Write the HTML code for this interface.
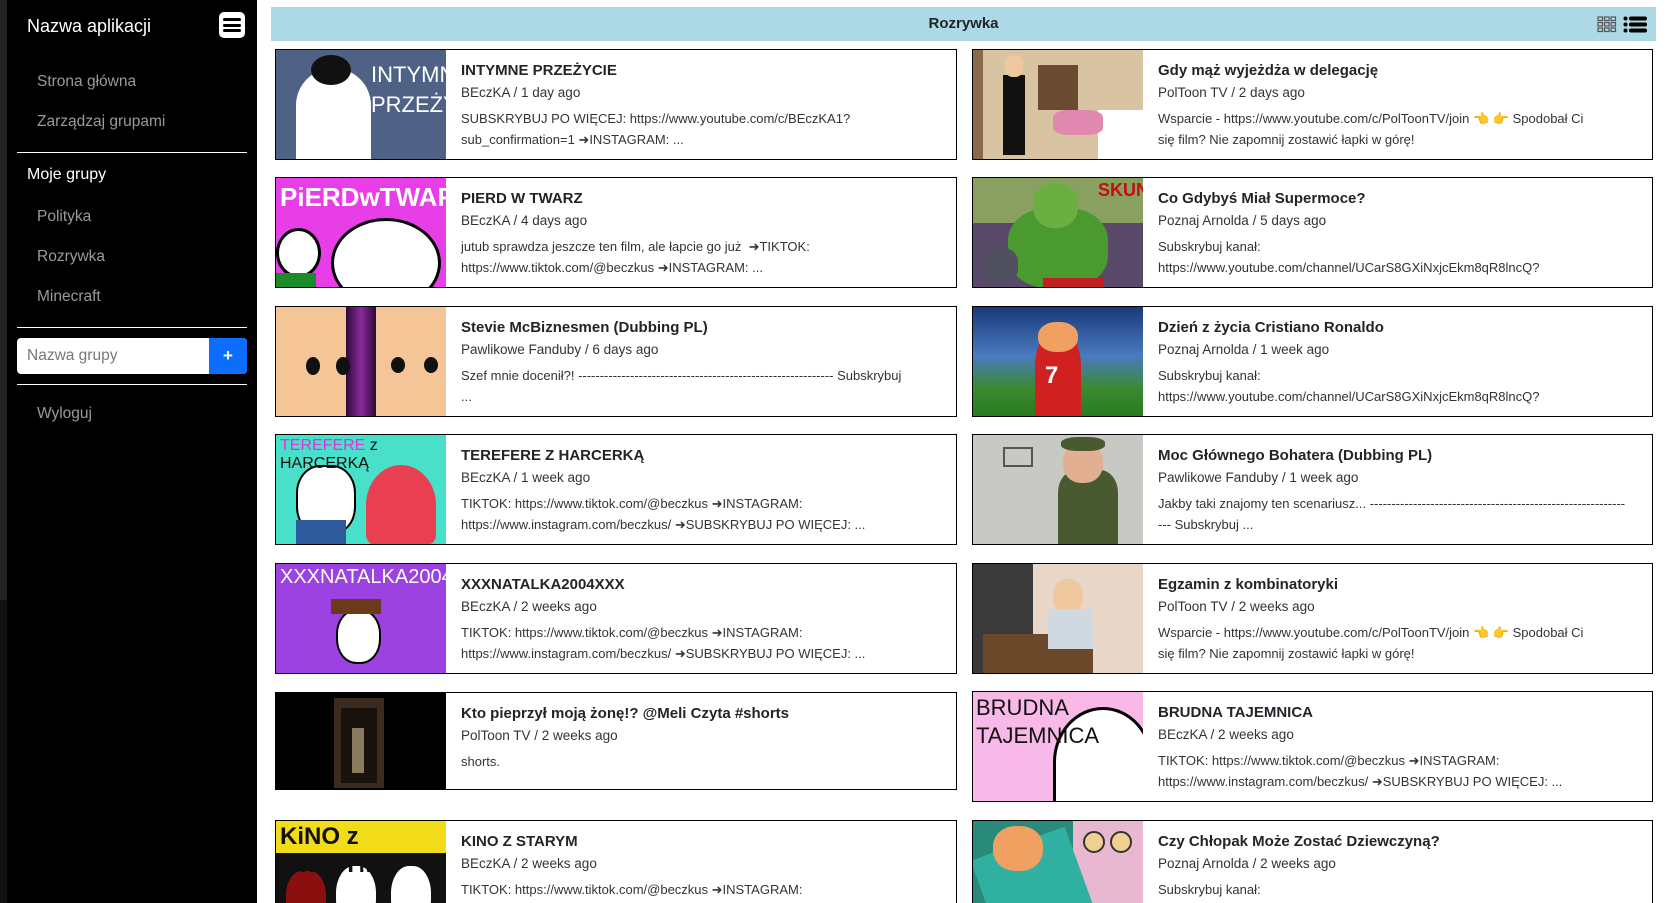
<!DOCTYPE html>
<html><head><meta charset="utf-8">
<style>
*{box-sizing:border-box;margin:0;padding:0}
html,body{width:1666px;height:903px;overflow:hidden}
body{background:#fff;font-family:"Liberation Sans",sans-serif;color:#212529;position:relative}
#wrap{position:absolute;left:0;top:0;width:1666px;height:903px;overflow:hidden}
.strip{position:absolute;left:0;top:0;width:7px;height:600px;background:#222}
.strip2{position:absolute;left:0;top:600px;width:7px;height:303px;background:#111}
.side{position:absolute;left:7px;top:0;width:250px;height:903px;background:#000;color:#fff}
.side .t{position:absolute;left:20px;top:16px;font-size:18px}
.side a{position:absolute;left:30px;font-size:15.5px;color:#9a9a9a;text-decoration:none}
.side .h{position:absolute;left:20px;font-size:16px;color:#fff}
.side hr{position:absolute;left:10px;width:230px;border:0;border-top:1px solid #fff}
.inp{position:absolute;left:10px;top:338px;width:230px;height:36px;background:#fff;border-radius:4px;overflow:hidden}
.inp span{position:absolute;left:10px;top:9px;color:#777;font-size:15.5px}
.inp b{position:absolute;right:0;top:0;width:38px;height:36px;background:#0d6efd;color:#fff;text-align:center;line-height:36px;font-size:17px}
.burger{position:absolute;left:212px;top:12px;width:26px;height:26px;background:#fff;border-radius:5px}
.burger i{position:absolute;left:4px;width:18px;height:3px;background:#000;border-radius:2px}
.hdr{position:absolute;left:271px;top:7px;width:1385px;height:34px;background:#add8e6;text-align:center;font-weight:bold;font-size:15px;line-height:34px}
.card{position:absolute;border:1px solid #000;height:111px;width:682px;background:#fff}
.th{position:absolute;left:0;top:0;width:170px;height:109px;overflow:hidden}
.tx{position:absolute;left:185px;top:10px;white-space:nowrap}
.tx .ti{font-weight:bold;font-size:15px;height:22px;line-height:22px}
.tx .me{font-size:13.5px;line-height:22px;height:22px;color:#333}
.tx .de{font-size:13px;line-height:20.5px;margin-top:5px;color:#333}
</style></head><body><div id="wrap">
<div class="strip"></div><div class="strip2"></div>
<div class="side">
<div class="t">Nazwa aplikacji</div>
<div class="burger"><i style="top:6px"></i><i style="top:11.5px"></i><i style="top:17px"></i></div>
<a style="top:73px">Strona główna</a>
<a style="top:113px">Zarządzaj grupami</a>
<hr style="top:152px">
<div class="h" style="top:166px">Moje grupy</div>
<a style="top:208px">Polityka</a>
<a style="top:248px">Rozrywka</a>
<a style="top:288px">Minecraft</a>
<hr style="top:327px">
<div class="inp"><span>Nazwa grupy</span><b>+</b></div>
<hr style="top:384px">
<a style="top:405px">Wyloguj</a>
</div>
<div class="hdr">Rozrywka
<svg style="position:absolute;left:1326px;top:9px" width="20" height="17" viewBox="0 0 20 17" fill="none" stroke="#555" stroke-width="1.2"><rect x="1" y="1" width="4.5" height="3.5"/><rect x="7.5" y="1" width="4.5" height="3.5"/><rect x="14" y="1" width="4.5" height="3.5"/><rect x="1" y="6.5" width="4.5" height="3.5"/><rect x="7.5" y="6.5" width="4.5" height="3.5"/><rect x="14" y="6.5" width="4.5" height="3.5"/><rect x="1" y="12" width="4.5" height="3.5"/><rect x="7.5" y="12" width="4.5" height="3.5"/><rect x="14" y="12" width="4.5" height="3.5"/></svg>
<svg style="position:absolute;left:1352px;top:9px" width="24" height="17" viewBox="0 0 24 17" fill="#000"><circle cx="2.5" cy="2.5" r="2"/><circle cx="2.5" cy="8.5" r="2"/><circle cx="2.5" cy="14.5" r="2"/><rect x="6" y="0.5" width="18" height="4" rx="2"/><rect x="6" y="6.5" width="18" height="4" rx="2"/><rect x="6" y="12.5" width="18" height="4" rx="2"/></svg>
</div>

<div class="card" style="left:275px;top:49px"><div class="th" style="background:#4f6185"><div style="position:absolute;left:20px;top:18px;width:75px;height:100px;background:#fff;border-radius:40px 40px 0 0"></div><div style="position:absolute;left:35px;top:5px;width:40px;height:30px;background:#111;border-radius:50%"></div><div style="position:absolute;left:95px;top:10px;color:#fff;font-size:22px;line-height:30px">INTYMNE<br>PRZEŻYCIE</div></div>
<div class="tx"><div class="ti">INTYMNE PRZEŻYCIE</div><div class="me">BEczKA / 1 day ago</div><div class="de">SUBSKRYBUJ PO WIĘCEJ: https://www.youtube.com/c/BEczKA1?<br>sub_confirmation=1 ➜INSTAGRAM: ...</div></div></div>

<div class="card" style="left:275px;top:177px"><div class="th" style="background:#e83ee8"><div style="position:absolute;left:55px;top:40px;width:110px;height:90px;background:#fff;border-radius:50%;border:3px solid #000"></div><div style="position:absolute;left:0;top:50px;width:45px;height:50px;background:#fff;border-radius:50%;border:3px solid #000"></div><div style="position:absolute;left:0;top:95px;width:40px;height:20px;background:#1a8a2a"></div><div style="position:absolute;left:4px;top:4px;color:#fff;font-size:26px;font-weight:bold">PiERDwTWARZ</div></div>
<div class="tx"><div class="ti">PIERD W TWARZ</div><div class="me">BEczKA / 4 days ago</div><div class="de">jutub sprawdza jeszcze ten film, ale łapcie go już &nbsp;➜TIKTOK:<br>https://www.tiktok.com/@beczkus ➜INSTAGRAM: ...</div></div></div>

<div class="card" style="left:275px;top:306px"><div class="th" style="background:#f4c697"><div style="position:absolute;left:70px;top:0;width:30px;height:110px;background:linear-gradient(90deg,#2a0a3a,#8a2a9a,#2a0a3a)"></div><div style="position:absolute;left:30px;top:50px;width:14px;height:18px;background:#111;border-radius:50%"></div><div style="position:absolute;left:60px;top:50px;width:14px;height:18px;background:#111;border-radius:50%"></div><div style="position:absolute;left:115px;top:50px;width:14px;height:16px;background:#111;border-radius:50%"></div><div style="position:absolute;left:148px;top:50px;width:14px;height:16px;background:#111;border-radius:50%"></div></div>
<div class="tx"><div class="ti">Stevie McBiznesmen (Dubbing PL)</div><div class="me">Pawlikowe Fanduby / 6 days ago</div><div class="de">Szef mnie docenił?! ----------------------------------------------------------- Subskrybuj<br>...</div></div></div>

<div class="card" style="left:275px;top:434px"><div class="th" style="background:#48e0c8"><div style="position:absolute;left:90px;top:30px;width:70px;height:80px;background:#e84050;border-radius:50% 50% 10px 10px"></div><div style="position:absolute;left:20px;top:30px;width:60px;height:70px;background:#fff;border-radius:40%;border:2px solid #000"></div><div style="position:absolute;left:20px;top:85px;width:50px;height:25px;background:#2d5a9a"></div><div style="position:absolute;left:4px;top:2px;color:#e030e0;font-size:16px">TEREFERE <span style="color:#111">z HARCERKĄ</span></div></div>
<div class="tx"><div class="ti">TEREFERE Z HARCERKĄ</div><div class="me">BEczKA / 1 week ago</div><div class="de">TIKTOK: https://www.tiktok.com/@beczkus ➜INSTAGRAM:<br>https://www.instagram.com/beczkus/ ➜SUBSKRYBUJ PO WIĘCEJ: ...</div></div></div>

<div class="card" style="left:275px;top:563px"><div class="th" style="background:#9b42e0"><div style="position:absolute;left:60px;top:45px;width:45px;height:55px;background:#fff;border-radius:45%;border:2px solid #000"></div><div style="position:absolute;left:55px;top:35px;width:50px;height:15px;background:#6a3a1a"></div><div style="position:absolute;left:4px;top:2px;color:#fff;font-size:20px">XXXNATALKA2004XXX</div></div>
<div class="tx"><div class="ti">XXXNATALKA2004XXX</div><div class="me">BEczKA / 2 weeks ago</div><div class="de">TIKTOK: https://www.tiktok.com/@beczkus ➜INSTAGRAM:<br>https://www.instagram.com/beczkus/ ➜SUBSKRYBUJ PO WIĘCEJ: ...</div></div></div>

<div class="card" style="left:275px;top:692px;height:98px"><div class="th" style="background:#000;height:96px"><div style="position:absolute;left:58px;top:5px;width:50px;height:90px;background:#3a2a20"></div><div style="position:absolute;left:65px;top:15px;width:36px;height:75px;background:#1a120c"></div><div style="position:absolute;left:76px;top:35px;width:12px;height:45px;background:#8a7a60"></div></div>
<div class="tx"><div class="ti">Kto pieprzył moją żonę!? @Meli Czyta #shorts</div><div class="me">PolToon TV / 2 weeks ago</div><div class="de">shorts.</div></div></div>

<div class="card" style="left:275px;top:820px"><div class="th" style="background:#f2dc1a"><div style="position:absolute;left:0;top:32px;width:170px;height:80px;background:#111"></div><div style="position:absolute;left:10px;top:50px;width:40px;height:60px;background:#8a1010;border-radius:40%"></div><div style="position:absolute;left:60px;top:45px;width:40px;height:60px;background:#fff;border-radius:45%"></div><div style="position:absolute;left:115px;top:45px;width:40px;height:60px;background:#fff;border-radius:45%"></div><div style="position:absolute;left:4px;top:2px;color:#111;font-size:24px;font-weight:bold">KiNO z STARYM</div></div>
<div class="tx"><div class="ti">KINO Z STARYM</div><div class="me">BEczKA / 2 weeks ago</div><div class="de">TIKTOK: https://www.tiktok.com/@beczkus ➜INSTAGRAM:</div></div></div>

<div class="card" style="left:972px;top:49px;width:681px"><div class="th" style="background:#d8c4a2"><div style="position:absolute;left:0;top:0;width:10px;height:110px;background:#8a6a4a"></div><div style="position:absolute;left:125px;top:60px;width:45px;height:50px;background:#fff"></div><div style="position:absolute;left:30px;top:25px;width:22px;height:80px;background:#111"></div><div style="position:absolute;left:32px;top:5px;width:18px;height:22px;background:#f0c8a0;border-radius:40%"></div><div style="position:absolute;left:80px;top:60px;width:50px;height:25px;background:#e088b0;border-radius:30%"></div><div style="position:absolute;left:65px;top:15px;width:40px;height:45px;background:#6a4a30"></div></div>
<div class="tx"><div class="ti">Gdy mąż wyjeżdża w delegację</div><div class="me">PolToon TV / 2 days ago</div><div class="de">Wsparcie - https://www.youtube.com/c/PolToonTV/join 👈 👉 Spodobał Ci<br>się film? Nie zapomnij zostawić łapki w górę!</div></div></div>

<div class="card" style="left:972px;top:177px;width:681px"><div class="th" style="background:#5a4a6a"><div style="position:absolute;left:0;top:0;width:170px;height:45px;background:#8aa060"></div><div style="position:absolute;left:35px;top:30px;width:100px;height:80px;background:#4a9a30;border-radius:40%"></div><div style="position:absolute;left:60px;top:5px;width:45px;height:45px;background:#6ab040;border-radius:45%"></div><div style="position:absolute;left:70px;top:100px;width:60px;height:10px;background:#c02020"></div><div style="position:absolute;left:10px;top:70px;width:35px;height:35px;background:#505060;border-radius:40%"></div><div style="position:absolute;left:125px;top:2px;color:#c01010;font-size:18px;font-weight:bold">SKUNK</div></div>
<div class="tx"><div class="ti">Co Gdybyś Miał Supermoce?</div><div class="me">Poznaj Arnolda / 5 days ago</div><div class="de">Subskrybuj kanał:<br>https://www.youtube.com/channel/UCarS8GXiNxjcEkm8qR8lncQ?</div></div></div>

<div class="card" style="left:972px;top:306px;width:681px"><div class="th" style="background:linear-gradient(#1a3a7a 0%,#4a7ac0 45%,#3a8a30 75%,#2a7a20 100%)"><div style="position:absolute;left:62px;top:25px;width:46px;height:85px;background:#d02020;border-radius:40% 40% 0 0"></div><div style="position:absolute;left:65px;top:15px;width:40px;height:30px;background:#f0a060;border-radius:45%"></div><div style="position:absolute;left:72px;top:55px;color:#fff;font-size:24px;font-weight:bold">7</div></div>
<div class="tx"><div class="ti">Dzień z życia Cristiano Ronaldo</div><div class="me">Poznaj Arnolda / 1 week ago</div><div class="de">Subskrybuj kanał:<br>https://www.youtube.com/channel/UCarS8GXiNxjcEkm8qR8lncQ?</div></div></div>

<div class="card" style="left:972px;top:434px;width:681px"><div class="th" style="background:#c8c8c4"><div style="position:absolute;left:85px;top:35px;width:60px;height:75px;background:#4a5a30;border-radius:30% 30% 0 0"></div><div style="position:absolute;left:90px;top:8px;width:40px;height:40px;background:#e0b090;border-radius:45%"></div><div style="position:absolute;left:88px;top:2px;width:44px;height:14px;background:#4a5a30;border-radius:40%"></div><div style="position:absolute;left:30px;top:12px;width:30px;height:20px;border:2px solid #555"></div></div>
<div class="tx"><div class="ti">Moc Głównego Bohatera (Dubbing PL)</div><div class="me">Pawlikowe Fanduby / 1 week ago</div><div class="de">Jakby taki znajomy ten scenariusz... -----------------------------------------------------------<br>--- Subskrybuj ...</div></div></div>

<div class="card" style="left:972px;top:563px;width:681px"><div class="th" style="background:#e8d6c8"><div style="position:absolute;left:0;top:0;width:60px;height:110px;background:#3a3a3a"></div><div style="position:absolute;left:10px;top:70px;width:110px;height:40px;background:#6a4a2a"></div><div style="position:absolute;left:80px;top:15px;width:30px;height:35px;background:#f0c8a0;border-radius:45%"></div><div style="position:absolute;left:75px;top:45px;width:45px;height:40px;background:#d0d8e0"></div></div>
<div class="tx"><div class="ti">Egzamin z kombinatoryki</div><div class="me">PolToon TV / 2 weeks ago</div><div class="de">Wsparcie - https://www.youtube.com/c/PolToonTV/join 👈 👉 Spodobał Ci<br>się film? Nie zapomnij zostawić łapki w górę!</div></div></div>

<div class="card" style="left:972px;top:691px;width:681px"><div class="th" style="background:#f8b8e8"><div style="position:absolute;left:80px;top:15px;width:100px;height:110px;background:#fff;border:3px solid #000;border-radius:50% 50% 0 0"></div><div style="position:absolute;left:3px;top:2px;color:#111;font-size:22px;line-height:28px">BRUDNA<br>TAJEMNICA</div></div>
<div class="tx"><div class="ti">BRUDNA TAJEMNICA</div><div class="me">BEczKA / 2 weeks ago</div><div class="de">TIKTOK: https://www.tiktok.com/@beczkus ➜INSTAGRAM:<br>https://www.instagram.com/beczkus/ ➜SUBSKRYBUJ PO WIĘCEJ: ...</div></div></div>

<div class="card" style="left:972px;top:820px;width:681px"><div class="th" style="background:#2a8a7a"><div style="position:absolute;left:100px;top:0;width:70px;height:110px;background:#e8b8d0"></div><div style="position:absolute;left:10px;top:20px;width:100px;height:90px;background:#30b0a0;transform:rotate(-20deg)"></div><div style="position:absolute;left:20px;top:5px;width:50px;height:45px;background:#f0a060;border-radius:45%"></div><div style="position:absolute;left:110px;top:10px;width:22px;height:22px;background:#f0d090;border-radius:50%;border:2px solid #333"></div><div style="position:absolute;left:137px;top:10px;width:22px;height:22px;background:#f0d090;border-radius:50%;border:2px solid #333"></div></div>
<div class="tx"><div class="ti">Czy Chłopak Może Zostać Dziewczyną?</div><div class="me">Poznaj Arnolda / 2 weeks ago</div><div class="de">Subskrybuj kanał:</div></div></div>
</div></body></html>
